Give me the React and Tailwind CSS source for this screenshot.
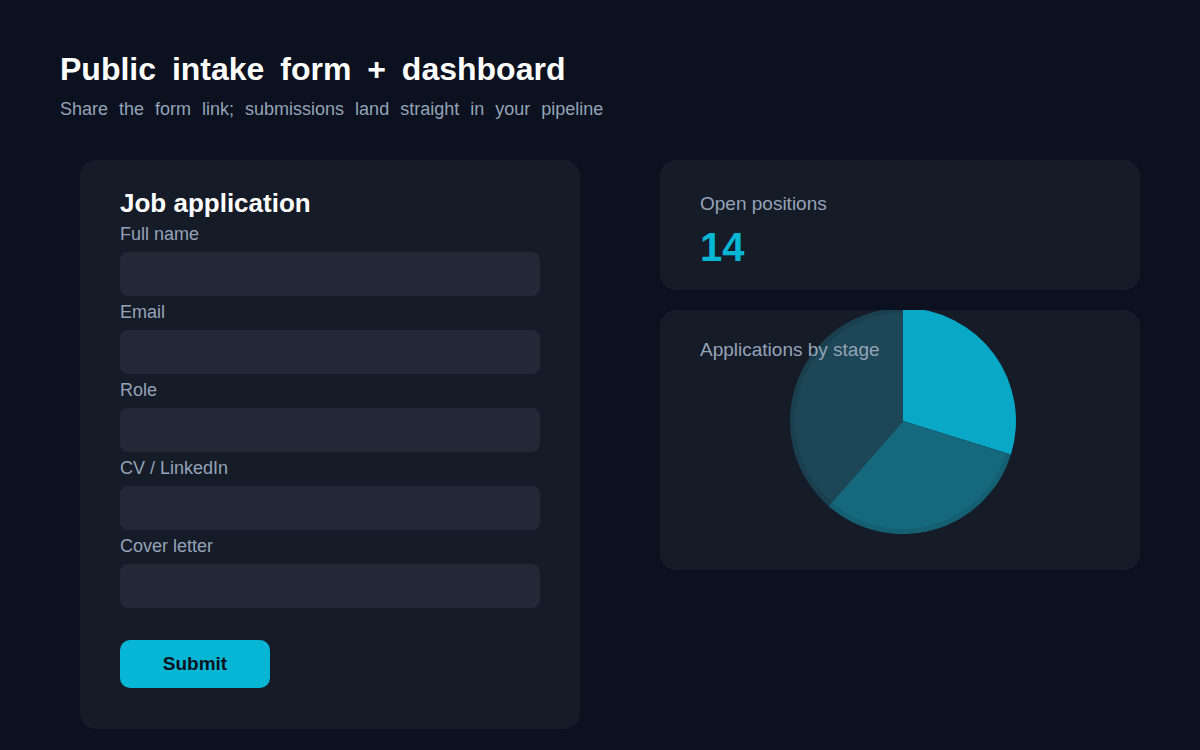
const fields = ["Full name", "Email", "Role", "CV / LinkedIn", "Cover letter"];

// pie slices, angles clockwise from 12 o'clock
const CX = 243;
const CY = 111;
const R = 113;

function pt(deg, r = R) {
  const a = (deg * Math.PI) / 180;
  return [CX + r * Math.sin(a), CY - r * Math.cos(a)];
}

function slicePath(from, to) {
  const [x1, y1] = pt(from);
  const [x2, y2] = pt(to);
  const large = to - from > 180 ? 1 : 0;
  return `M${CX} ${CY} L${x1} ${y1} A${R} ${R} 0 ${large} 1 ${x2} ${y2} Z`;
}

function ringPath(from, to, r) {
  const [x1, y1] = pt(from, r);
  const [x2, y2] = pt(to, r);
  const large = to - from > 180 ? 1 : 0;
  return `M${x1} ${y1} A${r} ${r} 0 ${large} 1 ${x2} ${y2}`;
}

const slices = [
  { from: 0, to: 107.3, color: "#08a8c6" },
  { from: 107.3, to: 221.3, color: "#16687c" },
  { from: 221.3, to: 360, color: "#1d4656" },
];

function Field({ label }) {
  return (
    <div className="flex flex-col gap-[7px]">
      <label className="text-[18px] leading-[22px] text-[#94a3b8]">{label}</label>
      <div className="h-11 w-full rounded-lg bg-[#222836]" />
    </div>
  );
}

export default function App() {
  return (
    <div
      className="min-h-[750px] w-full bg-[#0b111e] text-white"
      style={{ fontFamily: '"Liberation Sans", Arial, sans-serif' }}
    >
      <header className="px-[60px] pt-[49px]">
        <h1 className="text-[32px] font-bold leading-10 [word-spacing:7px]">Public intake form + dashboard</h1>
        <p className="mt-[7px] text-[18px] leading-[27px] text-[#94a3b8] [word-spacing:6px]">
          Share the form link; submissions land straight in your pipeline
        </p>
      </header>

      <div className="mt-[37px] flex items-start gap-20 pl-20">
        {/* Form */}
        <form className="flex w-[500px] flex-col gap-[5px] rounded-2xl bg-[#161b28] px-10 pb-[41px] pt-7">
          <h2 className="text-[26px] font-bold leading-[30px]">Job application</h2>
          {fields.map((f) => (
            <Field key={f} label={f} />
          ))}
          <button
            type="button"
            className="mt-[27px] h-12 w-[150px] rounded-[10px] bg-[#06b6d4] text-[19px] font-bold text-[#0b1220]"
          >
            Submit
          </button>
        </form>

        {/* Dashboard */}
        <div className="flex w-[480px] flex-col gap-5">
          <div className="h-[130px] rounded-2xl bg-[#161b28] px-10 pt-8">
            <div className="text-[19px] leading-[23px] text-[#94a3b8]">Open positions</div>
            <div className="mt-3 text-[40px] font-bold leading-10 text-[#06b6d4]">14</div>
          </div>

          <div className="relative h-[260px] overflow-hidden rounded-2xl bg-[#161b28] px-10 pt-[28px]">
            <svg className="absolute inset-0" width="480" height="260" viewBox="0 0 480 260">
              {slices.map((s) => (
                <path key={s.from} d={slicePath(s.from, s.to)} fill={s.color} />
              ))}
              <path
                d={ringPath(107.3, 359.9, 110.5)}
                fill="none"
                stroke="#000"
                strokeOpacity="0.08"
                strokeWidth="5"
              />
            </svg>
            <div className="relative text-[19px] leading-[23px] text-[#94a3b8]">Applications by stage</div>
          </div>
        </div>
      </div>
    </div>
  );
}
